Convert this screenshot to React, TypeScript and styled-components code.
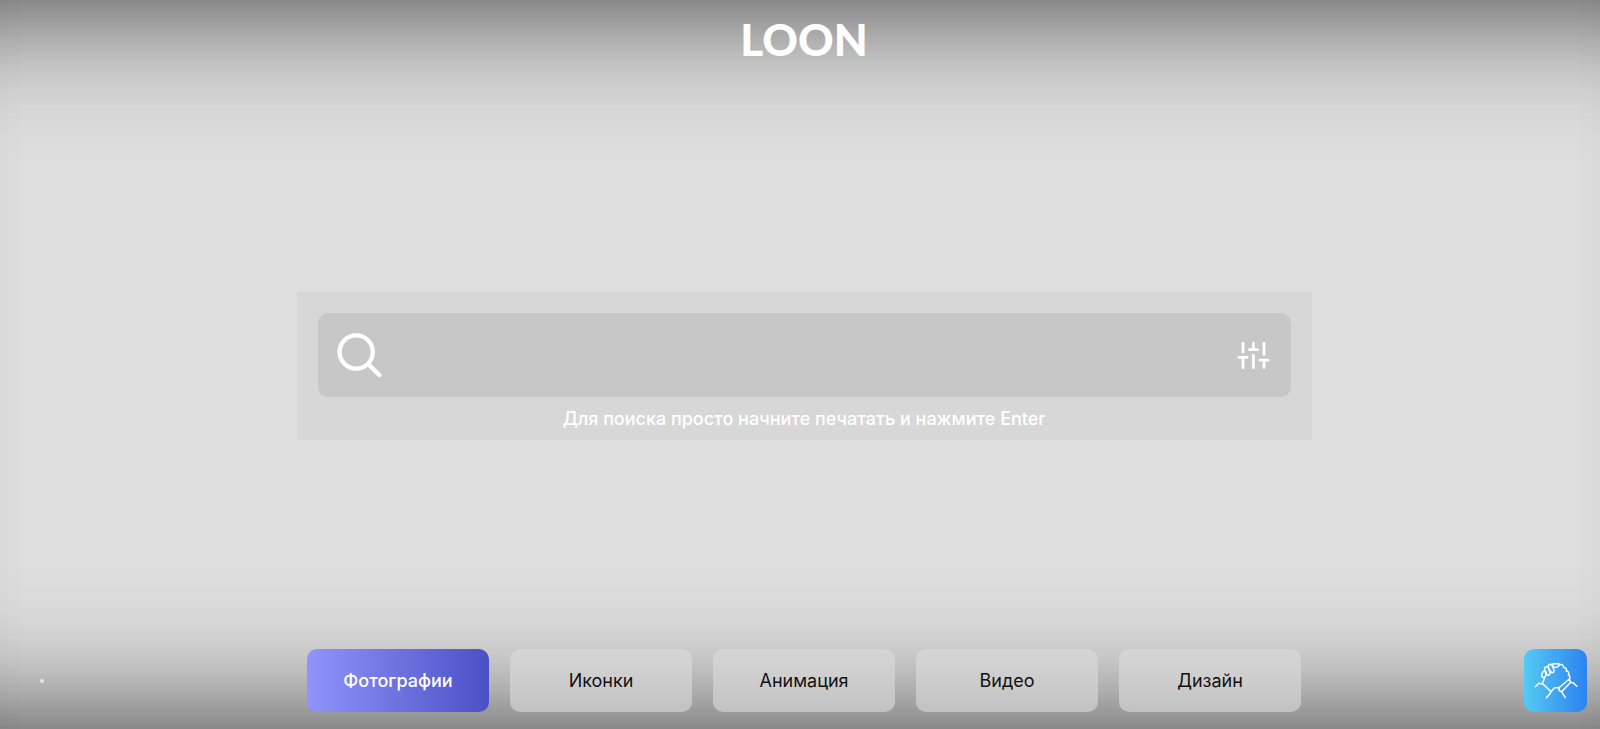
import React from 'react';
import styled, { createGlobalStyle } from 'styled-components';

const GlobalStyle = createGlobalStyle`
  *, *::before, *::after { box-sizing: border-box; }
  body {
    margin: 0;
    background: #dedede;
    font-family: Inter, "Open Sans", sans-serif;
  }
`;

const Page = styled.div`
  min-height: 100vh;
  display: grid;
  grid-template-rows: 1fr auto 1fr;
  padding: 19px 0 17px 8px;
  box-shadow:
    inset 0 140px 134px -140px rgba(0, 0, 0, 0.77),
    inset 0 -140px 134px -140px rgba(0, 0, 0, 0.77);
`;

const Header = styled.header`
  display: flex;
  justify-content: center;
  align-items: flex-start;
`;

const Logo = styled.a`
  color: #fff;
  font-family: Lato, Inter, sans-serif;
  font-size: 44px;
  line-height: 40px;
  font-weight: 900;
  text-decoration: none;
`;

const SearchPanel = styled.form`
  width: 1015px;
  max-width: 100%;
  margin: 0 auto;
  padding: 21px 21px 10px;
  background: #d7d7d7;
`;

const SearchBar = styled.div`
  display: flex;
  align-items: center;
  height: 84px;
  padding: 0 21px 0 19px;
  gap: 16px;
  border-radius: 10px;
  background: #c7c7c7;
`;

const SearchInput = styled.input`
  flex: 1;
  min-width: 0;
  height: 100%;
  border: 0;
  outline: 0;
  background: transparent;
  color: #fff;
  font: 500 24px Inter, sans-serif;
`;

const IconButton = styled.button`
  display: flex;
  padding: 0;
  border: 0;
  background: none;
  color: #fff;
  cursor: pointer;
`;

const Hint = styled.label`
  display: block;
  padding-top: 11px;
  color: #fff;
  font-size: 18px;
  line-height: 22px;
  font-weight: 500;
  text-align: center;
`;

const Footer = styled.footer`
  display: grid;
  grid-template-columns: 1fr auto 1fr;
  align-items: end;
`;

const Dot = styled.span`
  width: 4px;
  height: 4px;
  margin: 0 0 29px 32px;
  border-radius: 50%;
  background: #e4e4e4;
`;

const Categories = styled.nav`
  display: flex;
  gap: 21px;
`;

const Category = styled.button<{ $active?: boolean }>`
  width: 182px;
  height: 63px;
  padding: 0;
  border: 0;
  border-radius: 10px;
  background: ${p => (p.$active ? 'linear-gradient(90deg, #9094fb, #4b50c6)' : 'rgba(220, 220, 220, 0.6)')};
  color: ${p => (p.$active ? '#fff' : '#111')};
  font-family: inherit;
  font-size: 18px;
  line-height: 22px;
  font-weight: ${p => (p.$active ? 500 : 400)};
  cursor: pointer;
`;

const SupportButton = styled.button`
  display: flex;
  align-items: center;
  justify-content: center;
  justify-self: end;
  width: 63px;
  height: 63px;
  margin-right: 13px;
  padding: 0;
  border: 0;
  border-radius: 10px;
  background: linear-gradient(90deg, #54caf3, #2d82f0);
  cursor: pointer;
`;

const SearchIcon = () => (
  <svg width="46" height="46" viewBox="0 0 46 46" fill="none" stroke="currentColor" strokeWidth="4.4" strokeLinecap="round">
    <circle cx="19.2" cy="20" r="16.6" />
    <path d="M31.5 32.4 42.3 43" />
  </svg>
);

const FilterIcon = () => (
  <svg width="34" height="30" viewBox="0 0 34 30" fill="none" stroke="currentColor" strokeWidth="2.8" strokeLinecap="round">
    <path d="M7 3.2V12M3 17.4h8M7 18v9.7M17.4 3.2V9M13.4 9.6h8M17.4 15.5v12.2M28 3.2V14.4M24 20.2h8M28 21v6.7" />
  </svg>
);

const HandsIcon = () => (
  <svg width="63" height="63" viewBox="0 0 63 63" fill="none" stroke="#fff" strokeWidth="1.5" strokeLinecap="round" strokeLinejoin="round">
    <path d="M11.3 37.7 15 34.3l4.3 1L27 42.7l-1 2-3.7 4M18.7 33.5l1.8-4.5M27 42.7l3.5-4h3.8l2-1L45.3 30M35.3 39.3l-.3 2 2.7 1.6 3.6 5.8M38.3 42 46.7 33.3l-1.4-3M46.7 33.3l2.8.6 3.3 3.4" />
    <path d="M45.3 30a2.4 2.4 0 0 0-1-4 2.5 2.5 0 0 0-2-4 2.6 2.6 0 0 0-2.7-3.6 2.5 2.5 0 0 0-3.5-2.7 5 5 0 0 0-4.6-.8c-2-.5-3.5-.2-4.5 1" />
    <path d="M28.5 16.2c.8 2.6 4.3 3.2 6.8 0" />
    <ellipse cx="20" cy="25.3" rx="2.1" ry="3.3" transform="rotate(20 20 25.3)" />
    <ellipse cx="23.3" cy="22" rx="2.2" ry="4.4" transform="rotate(-20 23.3 22)" />
    <ellipse cx="27.2" cy="19.5" rx="2.2" ry="4.5" transform="rotate(-24 27.2 19.5)" />
  </svg>
);

const categories = ['Фотографии', 'Иконки', 'Анимация', 'Видео', 'Дизайн'];

export default function App() {
  const [active, setActive] = React.useState(categories[0]);
  return (
    <>
      <GlobalStyle />
      <Page>
        <Header>
          <Logo href="#">LOON</Logo>
        </Header>
        <SearchPanel onSubmit={e => e.preventDefault()}>
          <SearchBar>
            <IconButton type="submit" aria-label="Поиск"><SearchIcon /></IconButton>
            <SearchInput id="query" type="text" />
            <IconButton type="button" aria-label="Фильтры"><FilterIcon /></IconButton>
          </SearchBar>
          <Hint htmlFor="query">Для поиска просто начните печатать и нажмите Enter</Hint>
        </SearchPanel>
        <Footer>
          <Dot />
          <Categories>
            {categories.map(name => (
              <Category key={name} type="button" $active={name === active} onClick={() => setActive(name)}>{name}</Category>
            ))}
          </Categories>
          <SupportButton type="button" aria-label="Поддержать"><HandsIcon /></SupportButton>
        </Footer>
      </Page>
    </>
  );
}
